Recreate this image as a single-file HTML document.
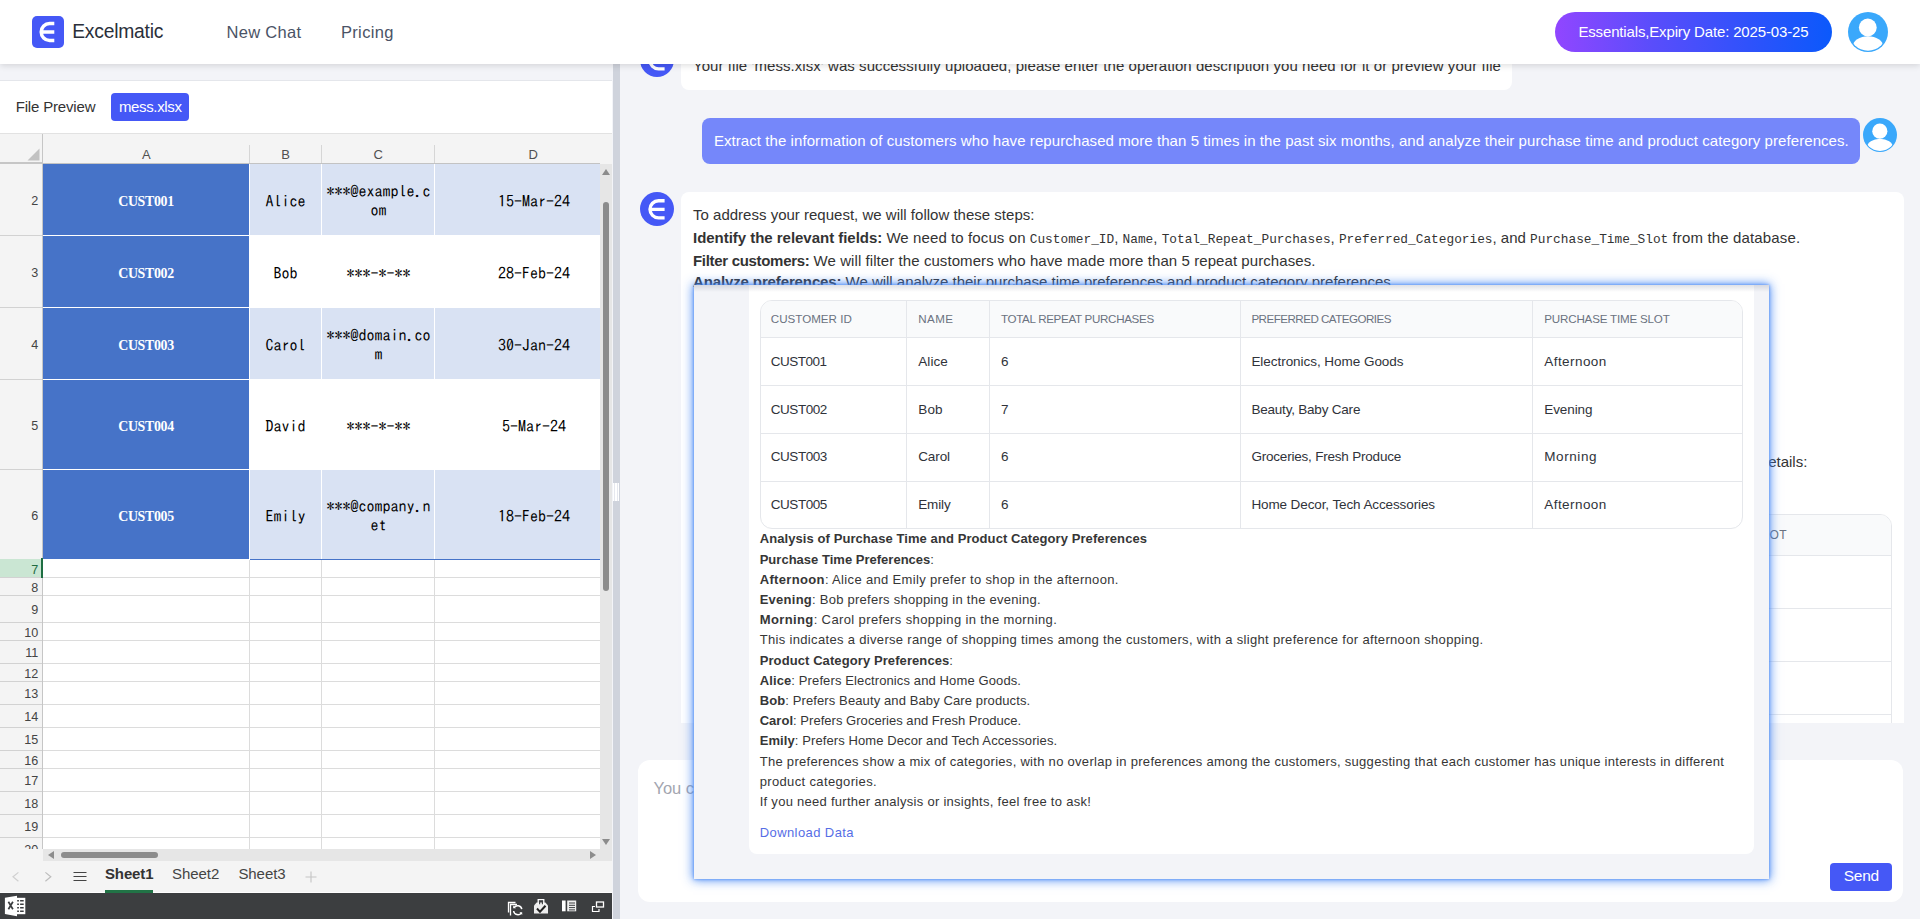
<!DOCTYPE html>
<html lang="en"><head><meta charset="utf-8"><title>Excelmatic</title>
<style>
html,body{margin:0;padding:0}
body{width:1920px;height:919px;overflow:hidden;position:relative;background:#f3f4f8;font-family:'Liberation Sans', sans-serif;color:#333}
b{font-weight:700}
.abs{position:absolute}
</style></head><body>
<div style="position:absolute;left:620px;top:64px;width:1300px;height:855px;background:#f3f4f8;"></div>
<svg width="34" height="34" viewBox="0 0 34 34" style="position:absolute;left:640px;top:43px"><circle cx="17" cy="17" r="17" fill="#4558f6"/><path d="M24.6 8.8 H18.55 A8.55 8.55 0 0 0 18.55 25.9 H24.6 M10 17.35 H24.6" fill="none" stroke="#fff" stroke-width="3.4"/></svg>
<div style="position:absolute;left:681px;top:30px;width:831px;height:60px;background:#fff;border-radius:8px;"></div>
<div style="position:absolute;top:66.00px;line-height:0;white-space:nowrap;font-size:15px;font-family:'Liberation Sans', sans-serif;left:693.00px;color:#333;"><span id="f0" style="letter-spacing:0.066px;">Your file 'mess.xlsx' was successfully uploaded, please enter the operation description you need for it or preview your file</span></div>
<div style="position:absolute;left:702px;top:118px;width:1158px;height:46px;background:#7587fa;border-radius:8px;"></div>
<div style="position:absolute;top:141.00px;line-height:0;white-space:nowrap;font-size:15px;font-family:'Liberation Sans', sans-serif;left:713.90px;color:#fff;"><span id="f1" style="letter-spacing:0.072px;">Extract the information of customers who have repurchased more than 5 times in the past six months, and analyze their purchase time and product category preferences.</span></div>
<svg width="34" height="34" viewBox="0 0 40 40" style="position:absolute;left:1863px;top:118px"><defs><clipPath id="u1863"><circle cx="20" cy="20" r="18.7"/></clipPath></defs><circle cx="20" cy="20" r="20" fill="#3aa8fb"/><g clip-path="url(#u1863)"><circle cx="19.8" cy="15.5" r="8.9" fill="#fff"/><ellipse cx="20" cy="34.7" rx="15.2" ry="10.4" fill="#fff"/></g></svg>
<svg width="34" height="34" viewBox="0 0 34 34" style="position:absolute;left:640px;top:192px"><circle cx="17" cy="17" r="17" fill="#4558f6"/><path d="M24.6 8.8 H18.55 A8.55 8.55 0 0 0 18.55 25.9 H24.6 M10 17.35 H24.6" fill="none" stroke="#fff" stroke-width="3.4"/></svg>
<div style="position:absolute;left:681px;top:192px;width:1223px;height:530.7px;background:#fff;border-radius:8px 8px 0 0;overflow:hidden"><div style="position:absolute;top:23.00px;line-height:0;white-space:nowrap;font-size:15px;font-family:'Liberation Sans', sans-serif;left:12.00px;color:#333;"><span id="f2" style="letter-spacing:0.008px;">To address your request, we will follow these steps:</span></div><div style="position:absolute;top:46.10px;line-height:0;white-space:nowrap;font-size:15px;font-family:'Liberation Sans', sans-serif;left:12.00px;color:#333;"><span id="f3" style="letter-spacing:-0.029px;"><b>Identify the relevant fields:</b></span> <span id="f4" style="letter-spacing:0.099px;">We need to focus on</span> <span style="font-family:'Liberation Mono',monospace;font-size:12.8px;">Customer_ID</span>, <span style="font-family:'Liberation Mono',monospace;font-size:12.8px;">Name</span>, <span style="font-family:'Liberation Mono',monospace;font-size:12.8px;">Total_Repeat_Purchases</span>, <span style="font-family:'Liberation Mono',monospace;font-size:12.8px;">Preferred_Categories</span>, and <span style="font-family:'Liberation Mono',monospace;font-size:12.8px;">Purchase_Time_Slot</span> <span id="f5" style="letter-spacing:0.151px;">from the database.</span></div><div style="position:absolute;top:69.00px;line-height:0;white-space:nowrap;font-size:15px;font-family:'Liberation Sans', sans-serif;left:12.00px;color:#333;"><span id="f6" style="letter-spacing:-0.312px;"><b>Filter customers:</b></span> <span id="f7" style="letter-spacing:0.073px;">We will filter the customers who have made more than 5 repeat purchases.</span></div><div style="position:absolute;top:90.40px;line-height:0;white-space:nowrap;font-size:15px;font-family:'Liberation Sans', sans-serif;left:12.00px;color:#333;"><span id="f8" style="letter-spacing:-0.125px;"><b>Analyze preferences:</b></span> <span id="f9" style="letter-spacing:-0.018px;">We will analyze their purchase time preferences and product category preferences.</span></div><div style="position:absolute;top:270.40px;line-height:0;white-space:nowrap;font-size:15px;font-family:'Liberation Sans', sans-serif;right:96.70px;color:#333;">Here is the information of the customers who meet the criteria, along with their details:</div><div style="position:absolute;left:12.600000000000023px;top:322px;width:1198.4px;height:260px;box-sizing:border-box;border:1px solid #e5e7eb;border-radius:12px 12px 0 0;overflow:hidden;background:#fff"><div style="position:absolute;left:0;top:0;right:0;height:40px;background:#f9fafb;border-bottom:1px solid #e5e7eb"></div><div style="position:absolute;left:0;right:0;top:93px;height:1px;background:#e5e7eb"></div><div style="position:absolute;left:0;right:0;top:146px;height:1px;background:#e5e7eb"></div><div style="position:absolute;left:0;right:0;top:199px;height:1px;background:#e5e7eb"></div></div><div style="position:absolute;top:343.34px;line-height:0;white-space:nowrap;font-size:12px;font-family:'Liberation Sans', sans-serif;right:116.80px;color:#6b7280;letter-spacing:0.5px;">PURCHASE TIME SLOT</div></div>
<div style="position:absolute;left:638px;top:760px;width:1265px;height:142px;background:#fff;border-radius:12px;"></div>
<div style="position:absolute;top:788.48px;line-height:0;white-space:nowrap;font-size:16.5px;font-family:'Liberation Sans', sans-serif;left:653.40px;color:#a3a6b0;">You can ask questions or give instructions about your file here</div>
<div style="position:absolute;left:1830px;top:863px;width:62px;height:28px;background:#4558f6;border-radius:4px;"></div>
<div style="position:absolute;top:876.43px;line-height:0;white-space:nowrap;font-size:15.5px;font-family:'Liberation Sans', sans-serif;left:1843.80px;color:#fff;"><span id="f10" style="letter-spacing:-0.301px;">Send</span></div>
<div style="position:absolute;left:694px;top:285.2px;width:1075.3px;height:593.6px;background:#f3f4f8;box-shadow:0 0 10px 1px rgba(66,133,244,0.9),0 0 3px 0 rgba(66,133,244,0.95);"><div style="position:absolute;left:0;top:0;right:0;bottom:0;overflow:hidden"><div style="position:absolute;left:54.5px;top:-15.199999999999989px;width:1005.5px;height:583.5px;background:#fff;border-radius:8px;"></div><div style="position:absolute;left:66.39999999999998px;top:15.199999999999989px;width:982.6px;height:228.39999999999998px;box-sizing:border-box;border:1px solid #e5e7eb;border-radius:12px;overflow:hidden;background:#fff;"><div style="position:absolute;left:0;top:0;right:0;height:36.30000000000001px;background:#f9fafb"></div></div><div style="position:absolute;left:67.39999999999998px;top:52.10000000000002px;width:980.6px;height:1px;background:#e5e7eb;"></div><div style="position:absolute;left:67.39999999999998px;top:99.60000000000002px;width:980.6px;height:1px;background:#e5e7eb;"></div><div style="position:absolute;left:67.39999999999998px;top:147.60000000000002px;width:980.6px;height:1px;background:#e5e7eb;"></div><div style="position:absolute;left:67.39999999999998px;top:195.60000000000002px;width:980.6px;height:1px;background:#e5e7eb;"></div><div style="position:absolute;left:212.29999999999995px;top:16.19999999999999px;width:1px;height:226.39999999999998px;background:#e5e7eb;"></div><div style="position:absolute;left:295.1px;top:16.19999999999999px;width:1px;height:226.39999999999998px;background:#e5e7eb;"></div><div style="position:absolute;left:545.5px;top:16.19999999999999px;width:1px;height:226.39999999999998px;background:#e5e7eb;"></div><div style="position:absolute;left:837.5px;top:16.19999999999999px;width:1px;height:226.39999999999998px;background:#e5e7eb;"></div><div style="position:absolute;top:34.08px;line-height:0;white-space:nowrap;font-size:11.6px;font-family:'Liberation Sans', sans-serif;left:76.80px;color:#6b7280;"><span id="f11" style="letter-spacing:0.004px;">CUSTOMER ID</span></div><div style="position:absolute;top:34.08px;line-height:0;white-space:nowrap;font-size:11.6px;font-family:'Liberation Sans', sans-serif;left:224.20px;color:#6b7280;"><span id="f12" style="letter-spacing:0.450px;">NAME</span></div><div style="position:absolute;top:34.08px;line-height:0;white-space:nowrap;font-size:11.6px;font-family:'Liberation Sans', sans-serif;left:306.90px;color:#6b7280;"><span id="f13" style="letter-spacing:-0.308px;">TOTAL REPEAT PURCHASES</span></div><div style="position:absolute;top:34.08px;line-height:0;white-space:nowrap;font-size:11.6px;font-family:'Liberation Sans', sans-serif;left:557.40px;color:#6b7280;"><span id="f14" style="letter-spacing:-0.515px;">PREFERRED CATEGORIES</span></div><div style="position:absolute;top:34.08px;line-height:0;white-space:nowrap;font-size:11.6px;font-family:'Liberation Sans', sans-serif;left:850.30px;color:#6b7280;"><span id="f15" style="letter-spacing:-0.186px;">PURCHASE TIME SLOT</span></div><div style="position:absolute;top:76.72px;line-height:0;white-space:nowrap;font-size:13.5px;font-family:'Liberation Sans', sans-serif;left:76.80px;color:#30333a;"><span id="f16" style="letter-spacing:-0.526px;">CUST001</span></div><div style="position:absolute;top:76.72px;line-height:0;white-space:nowrap;font-size:13.5px;font-family:'Liberation Sans', sans-serif;left:224.20px;color:#30333a;"><span id="f17" style="letter-spacing:0.107px;">Alice</span></div><div style="position:absolute;top:76.72px;line-height:0;white-space:nowrap;font-size:13.5px;font-family:'Liberation Sans', sans-serif;left:306.90px;color:#30333a;">6</div><div style="position:absolute;top:76.72px;line-height:0;white-space:nowrap;font-size:13.5px;font-family:'Liberation Sans', sans-serif;left:557.40px;color:#30333a;"><span id="f18" style="letter-spacing:-0.042px;">Electronics, Home Goods</span></div><div style="position:absolute;top:76.72px;line-height:0;white-space:nowrap;font-size:13.5px;font-family:'Liberation Sans', sans-serif;left:850.30px;color:#30333a;"><span id="f19" style="letter-spacing:0.428px;">Afternoon</span></div><div style="position:absolute;top:124.42px;line-height:0;white-space:nowrap;font-size:13.5px;font-family:'Liberation Sans', sans-serif;left:76.80px;color:#30333a;"><span id="f20" style="letter-spacing:-0.469px;">CUST002</span></div><div style="position:absolute;top:124.42px;line-height:0;white-space:nowrap;font-size:13.5px;font-family:'Liberation Sans', sans-serif;left:224.20px;color:#30333a;"><span id="f21" style="letter-spacing:0.190px;">Bob</span></div><div style="position:absolute;top:124.42px;line-height:0;white-space:nowrap;font-size:13.5px;font-family:'Liberation Sans', sans-serif;left:306.90px;color:#30333a;">7</div><div style="position:absolute;top:124.42px;line-height:0;white-space:nowrap;font-size:13.5px;font-family:'Liberation Sans', sans-serif;left:557.40px;color:#30333a;"><span id="f22" style="letter-spacing:-0.207px;">Beauty, Baby Care</span></div><div style="position:absolute;top:124.42px;line-height:0;white-space:nowrap;font-size:13.5px;font-family:'Liberation Sans', sans-serif;left:850.30px;color:#30333a;"><span id="f23" style="letter-spacing:-0.100px;">Evening</span></div><div style="position:absolute;top:172.12px;line-height:0;white-space:nowrap;font-size:13.5px;font-family:'Liberation Sans', sans-serif;left:76.80px;color:#30333a;"><span id="f24" style="letter-spacing:-0.469px;">CUST003</span></div><div style="position:absolute;top:172.12px;line-height:0;white-space:nowrap;font-size:13.5px;font-family:'Liberation Sans', sans-serif;left:224.20px;color:#30333a;"><span id="f25" style="letter-spacing:-0.093px;">Carol</span></div><div style="position:absolute;top:172.12px;line-height:0;white-space:nowrap;font-size:13.5px;font-family:'Liberation Sans', sans-serif;left:306.90px;color:#30333a;">6</div><div style="position:absolute;top:172.12px;line-height:0;white-space:nowrap;font-size:13.5px;font-family:'Liberation Sans', sans-serif;left:557.40px;color:#30333a;"><span id="f26" style="letter-spacing:-0.203px;">Groceries, Fresh Produce</span></div><div style="position:absolute;top:172.12px;line-height:0;white-space:nowrap;font-size:13.5px;font-family:'Liberation Sans', sans-serif;left:850.30px;color:#30333a;"><span id="f27" style="letter-spacing:0.574px;">Morning</span></div><div style="position:absolute;top:219.82px;line-height:0;white-space:nowrap;font-size:13.5px;font-family:'Liberation Sans', sans-serif;left:76.80px;color:#30333a;"><span id="f28" style="letter-spacing:-0.469px;">CUST005</span></div><div style="position:absolute;top:219.82px;line-height:0;white-space:nowrap;font-size:13.5px;font-family:'Liberation Sans', sans-serif;left:224.20px;color:#30333a;"><span id="f29" style="letter-spacing:-0.120px;">Emily</span></div><div style="position:absolute;top:219.82px;line-height:0;white-space:nowrap;font-size:13.5px;font-family:'Liberation Sans', sans-serif;left:306.90px;color:#30333a;">6</div><div style="position:absolute;top:219.82px;line-height:0;white-space:nowrap;font-size:13.5px;font-family:'Liberation Sans', sans-serif;left:557.40px;color:#30333a;"><span id="f30" style="letter-spacing:-0.107px;">Home Decor, Tech Accessories</span></div><div style="position:absolute;top:219.82px;line-height:0;white-space:nowrap;font-size:13.5px;font-family:'Liberation Sans', sans-serif;left:850.30px;color:#30333a;"><span id="f31" style="letter-spacing:0.428px;">Afternoon</span></div><div style="position:absolute;top:254.30px;line-height:0;white-space:nowrap;font-size:13px;font-family:'Liberation Sans', sans-serif;left:65.70px;color:#363636;"><span id="f32" style="letter-spacing:0.081px;"><b>Analysis of Purchase Time and Product Category Preferences</b></span></div><div style="position:absolute;top:274.49px;line-height:0;white-space:nowrap;font-size:13px;font-family:'Liberation Sans', sans-serif;left:65.70px;color:#363636;"><span id="f33" style="letter-spacing:0.014px;"><b>Purchase Time Preferences</b>:</span></div><div style="position:absolute;top:294.68px;line-height:0;white-space:nowrap;font-size:13px;font-family:'Liberation Sans', sans-serif;left:65.70px;color:#363636;"><span id="f34" style="letter-spacing:0.343px;"><b>Afternoon</b>: Alice and Emily prefer to shop in the afternoon.</span></div><div style="position:absolute;top:314.87px;line-height:0;white-space:nowrap;font-size:13px;font-family:'Liberation Sans', sans-serif;left:65.70px;color:#363636;"><span id="f35" style="letter-spacing:0.256px;"><b>Evening</b>: Bob prefers shopping in the evening.</span></div><div style="position:absolute;top:335.06px;line-height:0;white-space:nowrap;font-size:13px;font-family:'Liberation Sans', sans-serif;left:65.70px;color:#363636;"><span id="f36" style="letter-spacing:0.380px;"><b>Morning</b>: Carol prefers shopping in the morning.</span></div><div style="position:absolute;top:355.25px;line-height:0;white-space:nowrap;font-size:13px;font-family:'Liberation Sans', sans-serif;left:65.70px;color:#363636;"><span id="f37" style="letter-spacing:0.329px;">This indicates a diverse range of shopping times among the customers, with a slight preference for afternoon shopping.</span></div><div style="position:absolute;top:375.44px;line-height:0;white-space:nowrap;font-size:13px;font-family:'Liberation Sans', sans-serif;left:65.70px;color:#363636;"><span id="f38" style="letter-spacing:0.091px;"><b>Product Category Preferences</b>:</span></div><div style="position:absolute;top:395.63px;line-height:0;white-space:nowrap;font-size:13px;font-family:'Liberation Sans', sans-serif;left:65.70px;color:#363636;"><span id="f39" style="letter-spacing:0.116px;"><b>Alice</b>: Prefers Electronics and Home Goods.</span></div><div style="position:absolute;top:415.82px;line-height:0;white-space:nowrap;font-size:13px;font-family:'Liberation Sans', sans-serif;left:65.70px;color:#363636;"><span id="f40" style="letter-spacing:0.109px;"><b>Bob</b>: Prefers Beauty and Baby Care products.</span></div><div style="position:absolute;top:436.01px;line-height:0;white-space:nowrap;font-size:13px;font-family:'Liberation Sans', sans-serif;left:65.70px;color:#363636;"><span id="f41" style="letter-spacing:0.030px;"><b>Carol</b>: Prefers Groceries and Fresh Produce.</span></div><div style="position:absolute;top:456.20px;line-height:0;white-space:nowrap;font-size:13px;font-family:'Liberation Sans', sans-serif;left:65.70px;color:#363636;"><span id="f42" style="letter-spacing:0.093px;"><b>Emily</b>: Prefers Home Decor and Tech Accessories.</span></div><div style="position:absolute;top:476.39px;line-height:0;white-space:nowrap;font-size:13px;font-family:'Liberation Sans', sans-serif;left:65.70px;color:#363636;"><span id="f43" style="letter-spacing:0.290px;">The preferences show a mix of categories, with no overlap in preferences among the customers, suggesting that each customer has unique interests in different</span></div><div style="position:absolute;top:496.58px;line-height:0;white-space:nowrap;font-size:13px;font-family:'Liberation Sans', sans-serif;left:65.70px;color:#363636;"><span id="f44" style="letter-spacing:0.354px;">product categories.</span></div><div style="position:absolute;top:516.77px;line-height:0;white-space:nowrap;font-size:13px;font-family:'Liberation Sans', sans-serif;left:65.70px;color:#363636;"><span id="f45" style="letter-spacing:0.277px;">If you need further analysis or insights, feel free to ask!</span></div><div style="position:absolute;top:547.90px;line-height:0;white-space:nowrap;font-size:13px;font-family:'Liberation Sans', sans-serif;left:65.70px;color:#566ee6;"><span id="f46" style="letter-spacing:0.416px;">Download Data</span></div><div style="position:absolute;left:0px;top:0.0px;width:1075.3px;height:7px;background:linear-gradient(180deg,rgba(60,70,100,0.16),rgba(60,70,100,0));"></div></div></div>
<div style="position:absolute;left:0px;top:64px;width:612px;height:17px;background:#f3f4f8;border-bottom:1px solid #e4e6eb;box-sizing:border-box;"></div>
<div style="position:absolute;left:0px;top:81px;width:612px;height:52px;background:#fff;"></div>
<div style="position:absolute;top:106.50px;line-height:0;white-space:nowrap;font-size:15px;font-family:'Liberation Sans', sans-serif;left:15.70px;color:#333;"><span id="f47" style="letter-spacing:-0.174px;">File Preview</span></div>
<div style="position:absolute;left:111px;top:93px;width:78px;height:28px;background:#4558f6;border-radius:4px;"></div>
<div style="position:absolute;top:106.50px;line-height:0;white-space:nowrap;font-size:15px;font-family:'Liberation Sans', sans-serif;left:118.90px;color:#fff;"><span id="f48" style="letter-spacing:-0.349px;">mess.xlsx</span></div>
<div style="position:absolute;left:0px;top:133px;width:612px;height:760px;background:#fff;"></div>
<div style="position:absolute;left:0px;top:133px;width:612px;height:31px;background:#f4f4f4;border-top:1px solid #e2e2e2;box-sizing:border-box;"></div>
<div style="position:absolute;left:43px;top:163px;width:557px;height:1px;background:#c3c3c3;"></div>
<div style="position:absolute;left:0px;top:162px;width:43px;height:2px;background:#c6c6c6;"></div>
<div style="position:absolute;left:42px;top:134px;width:1px;height:30px;background:#c6c6c6;"></div>
<svg width="13" height="13" viewBox="0 0 13 13" style="position:absolute;left:27px;top:148px"><path d="M12.5 0.5 V12.5 H0.5 Z" fill="#c2c2c2"/></svg>
<div style="position:absolute;left:249px;top:145px;width:1px;height:18px;background:#d6d6d6;"></div>
<div style="position:absolute;left:321px;top:145px;width:1px;height:18px;background:#d6d6d6;"></div>
<div style="position:absolute;left:434px;top:145px;width:1px;height:18px;background:#d6d6d6;"></div>
<div style="position:absolute;top:155.30px;line-height:0;white-space:nowrap;font-size:13px;font-family:'Liberation Sans', sans-serif;left:146.30px;transform:translateX(-50%);color:#505050;">A</div>
<div style="position:absolute;top:155.30px;line-height:0;white-space:nowrap;font-size:13px;font-family:'Liberation Sans', sans-serif;left:285.60px;transform:translateX(-50%);color:#505050;">B</div>
<div style="position:absolute;top:155.30px;line-height:0;white-space:nowrap;font-size:13px;font-family:'Liberation Sans', sans-serif;left:378.20px;transform:translateX(-50%);color:#505050;">C</div>
<div style="position:absolute;top:155.30px;line-height:0;white-space:nowrap;font-size:13px;font-family:'Liberation Sans', sans-serif;left:533.20px;transform:translateX(-50%);color:#505050;">D</div>
<div style="position:absolute;left:0;top:0;width:612px;height:849px;overflow:hidden;clip-path:inset(164px 12px 0 0)"><div style="position:absolute;left:0px;top:164px;width:42px;height:697px;background:#f4f4f4;"></div><div style="position:absolute;left:42px;top:164px;width:1px;height:685px;background:#c6c6c6;"></div><div style="position:absolute;left:249px;top:560px;width:1px;height:289px;background:#dcdcdc;"></div><div style="position:absolute;left:321px;top:560px;width:1px;height:289px;background:#dcdcdc;"></div><div style="position:absolute;left:434px;top:560px;width:1px;height:289px;background:#dcdcdc;"></div><div style="position:absolute;left:0px;top:235px;width:42px;height:1px;background:#d2d2d2;"></div><div style="position:absolute;left:43px;top:164px;width:206px;height:71px;background:#4673c8;"></div><div style="position:absolute;left:43px;top:235px;width:207px;height:1px;background:#fff;"></div><div style="position:absolute;left:250px;top:164px;width:71px;height:71px;background:#d9e2f3;"></div><div style="position:absolute;left:322px;top:164px;width:112px;height:71px;background:#d9e2f3;"></div><div style="position:absolute;left:435px;top:164px;width:165px;height:71px;background:#d9e2f3;"></div><div style="position:absolute;top:201.61px;line-height:0;white-space:nowrap;font-size:13.9px;font-family:'Liberation Serif', serif;left:146.00px;transform:translateX(-50%);color:#fff;font-weight:700;"><span id="f49" style="letter-spacing:-0.327px;">CUST001</span></div><div style="position:absolute;top:201.02px;line-height:0;white-space:nowrap;font-size:16px;font-family:'IPAGothic', 'Liberation Mono', monospace;left:285.60px;transform:translateX(-50%);color:#000;">Alice</div><div style="position:absolute;top:190.82px;line-height:0;white-space:nowrap;font-size:16px;font-family:'IPAGothic', 'Liberation Mono', monospace;left:378.40px;transform:translateX(-50%);color:#000;">***@example.c</div><div style="position:absolute;top:209.82px;line-height:0;white-space:nowrap;font-size:16px;font-family:'IPAGothic', 'Liberation Mono', monospace;left:378.40px;transform:translateX(-50%);color:#000;">om</div><div style="position:absolute;top:201.02px;line-height:0;white-space:nowrap;font-size:16px;font-family:'IPAGothic', 'Liberation Mono', monospace;left:534.00px;transform:translateX(-50%);color:#000;">15-Mar-24</div><div style="position:absolute;top:200.93px;line-height:0;white-space:nowrap;font-size:12.6px;font-family:'Liberation Sans', sans-serif;left:37.60px;color:#444;left:auto;right:573.7px;">2</div><div style="position:absolute;left:0px;top:307px;width:42px;height:1px;background:#d2d2d2;"></div><div style="position:absolute;left:43px;top:236px;width:206px;height:71px;background:#4673c8;"></div><div style="position:absolute;left:43px;top:307px;width:207px;height:1px;background:#fff;"></div><div style="position:absolute;top:273.61px;line-height:0;white-space:nowrap;font-size:13.9px;font-family:'Liberation Serif', serif;left:146.00px;transform:translateX(-50%);color:#fff;font-weight:700;"><span id="f50" style="letter-spacing:-0.327px;">CUST002</span></div><div style="position:absolute;top:273.02px;line-height:0;white-space:nowrap;font-size:16px;font-family:'IPAGothic', 'Liberation Mono', monospace;left:285.60px;transform:translateX(-50%);color:#000;">Bob</div><div style="position:absolute;top:273.02px;line-height:0;white-space:nowrap;font-size:16px;font-family:'IPAGothic', 'Liberation Mono', monospace;left:378.40px;transform:translateX(-50%);color:#000;">***-*-**</div><div style="position:absolute;top:273.02px;line-height:0;white-space:nowrap;font-size:16px;font-family:'IPAGothic', 'Liberation Mono', monospace;left:534.00px;transform:translateX(-50%);color:#000;">28-Feb-24</div><div style="position:absolute;top:272.93px;line-height:0;white-space:nowrap;font-size:12.6px;font-family:'Liberation Sans', sans-serif;left:37.60px;color:#444;left:auto;right:573.7px;">3</div><div style="position:absolute;left:0px;top:379px;width:42px;height:1px;background:#d2d2d2;"></div><div style="position:absolute;left:43px;top:308px;width:206px;height:71px;background:#4673c8;"></div><div style="position:absolute;left:43px;top:379px;width:207px;height:1px;background:#fff;"></div><div style="position:absolute;left:250px;top:308px;width:71px;height:71px;background:#d9e2f3;"></div><div style="position:absolute;left:322px;top:308px;width:112px;height:71px;background:#d9e2f3;"></div><div style="position:absolute;left:435px;top:308px;width:165px;height:71px;background:#d9e2f3;"></div><div style="position:absolute;top:345.61px;line-height:0;white-space:nowrap;font-size:13.9px;font-family:'Liberation Serif', serif;left:146.00px;transform:translateX(-50%);color:#fff;font-weight:700;"><span id="f51" style="letter-spacing:-0.327px;">CUST003</span></div><div style="position:absolute;top:345.02px;line-height:0;white-space:nowrap;font-size:16px;font-family:'IPAGothic', 'Liberation Mono', monospace;left:285.60px;transform:translateX(-50%);color:#000;">Carol</div><div style="position:absolute;top:334.82px;line-height:0;white-space:nowrap;font-size:16px;font-family:'IPAGothic', 'Liberation Mono', monospace;left:378.40px;transform:translateX(-50%);color:#000;">***@domain.co</div><div style="position:absolute;top:353.82px;line-height:0;white-space:nowrap;font-size:16px;font-family:'IPAGothic', 'Liberation Mono', monospace;left:378.40px;transform:translateX(-50%);color:#000;">m</div><div style="position:absolute;top:345.02px;line-height:0;white-space:nowrap;font-size:16px;font-family:'IPAGothic', 'Liberation Mono', monospace;left:534.00px;transform:translateX(-50%);color:#000;">30-Jan-24</div><div style="position:absolute;top:344.93px;line-height:0;white-space:nowrap;font-size:12.6px;font-family:'Liberation Sans', sans-serif;left:37.60px;color:#444;left:auto;right:573.7px;">4</div><div style="position:absolute;left:0px;top:469px;width:42px;height:1px;background:#d2d2d2;"></div><div style="position:absolute;left:43px;top:380px;width:206px;height:89px;background:#4673c8;"></div><div style="position:absolute;left:43px;top:469px;width:207px;height:1px;background:#fff;"></div><div style="position:absolute;top:426.61px;line-height:0;white-space:nowrap;font-size:13.9px;font-family:'Liberation Serif', serif;left:146.00px;transform:translateX(-50%);color:#fff;font-weight:700;"><span id="f52" style="letter-spacing:-0.327px;">CUST004</span></div><div style="position:absolute;top:426.02px;line-height:0;white-space:nowrap;font-size:16px;font-family:'IPAGothic', 'Liberation Mono', monospace;left:285.60px;transform:translateX(-50%);color:#000;">David</div><div style="position:absolute;top:426.02px;line-height:0;white-space:nowrap;font-size:16px;font-family:'IPAGothic', 'Liberation Mono', monospace;left:378.40px;transform:translateX(-50%);color:#000;">***-*-**</div><div style="position:absolute;top:426.02px;line-height:0;white-space:nowrap;font-size:16px;font-family:'IPAGothic', 'Liberation Mono', monospace;left:534.00px;transform:translateX(-50%);color:#000;">5-Mar-24</div><div style="position:absolute;top:425.93px;line-height:0;white-space:nowrap;font-size:12.6px;font-family:'Liberation Sans', sans-serif;left:37.60px;color:#444;left:auto;right:573.7px;">5</div><div style="position:absolute;left:0px;top:559px;width:42px;height:1px;background:#d2d2d2;"></div><div style="position:absolute;left:43px;top:470px;width:206px;height:89px;background:#4673c8;"></div><div style="position:absolute;left:43px;top:559px;width:207px;height:1px;background:#fff;"></div><div style="position:absolute;left:250px;top:470px;width:71px;height:89px;background:#d9e2f3;"></div><div style="position:absolute;left:322px;top:470px;width:112px;height:89px;background:#d9e2f3;"></div><div style="position:absolute;left:435px;top:470px;width:165px;height:89px;background:#d9e2f3;"></div><div style="position:absolute;top:516.61px;line-height:0;white-space:nowrap;font-size:13.9px;font-family:'Liberation Serif', serif;left:146.00px;transform:translateX(-50%);color:#fff;font-weight:700;"><span id="f53" style="letter-spacing:-0.327px;">CUST005</span></div><div style="position:absolute;top:516.02px;line-height:0;white-space:nowrap;font-size:16px;font-family:'IPAGothic', 'Liberation Mono', monospace;left:285.60px;transform:translateX(-50%);color:#000;">Emily</div><div style="position:absolute;top:505.82px;line-height:0;white-space:nowrap;font-size:16px;font-family:'IPAGothic', 'Liberation Mono', monospace;left:378.40px;transform:translateX(-50%);color:#000;">***@company.n</div><div style="position:absolute;top:524.82px;line-height:0;white-space:nowrap;font-size:16px;font-family:'IPAGothic', 'Liberation Mono', monospace;left:378.40px;transform:translateX(-50%);color:#000;">et</div><div style="position:absolute;top:516.02px;line-height:0;white-space:nowrap;font-size:16px;font-family:'IPAGothic', 'Liberation Mono', monospace;left:534.00px;transform:translateX(-50%);color:#000;">18-Feb-24</div><div style="position:absolute;top:515.93px;line-height:0;white-space:nowrap;font-size:12.6px;font-family:'Liberation Sans', sans-serif;left:37.60px;color:#444;left:auto;right:573.7px;">6</div><div style="position:absolute;left:0px;top:577px;width:42px;height:1px;background:#d2d2d2;"></div><div style="position:absolute;left:43px;top:577px;width:557px;height:1px;background:#dcdcdc;"></div><div style="position:absolute;left:0px;top:559px;width:41px;height:18px;background:#cae6d3;"></div><div style="position:absolute;left:41px;top:558px;width:2px;height:20px;background:#1e6e42;"></div><div style="position:absolute;top:569.63px;line-height:0;white-space:nowrap;font-size:12.6px;font-family:'Liberation Sans', sans-serif;left:-0.60px;color:#1f6b41;left:auto;right:573.7px;">7</div><div style="position:absolute;left:0px;top:595px;width:42px;height:1px;background:#d2d2d2;"></div><div style="position:absolute;left:43px;top:595px;width:557px;height:1px;background:#dcdcdc;"></div><div style="position:absolute;top:587.63px;line-height:0;white-space:nowrap;font-size:12.6px;font-family:'Liberation Sans', sans-serif;left:-0.60px;color:#444;left:auto;right:573.7px;">8</div><div style="position:absolute;left:0px;top:622px;width:42px;height:1px;background:#d2d2d2;"></div><div style="position:absolute;left:43px;top:622px;width:557px;height:1px;background:#dcdcdc;"></div><div style="position:absolute;top:610.13px;line-height:0;white-space:nowrap;font-size:12.6px;font-family:'Liberation Sans', sans-serif;left:-0.60px;color:#444;left:auto;right:573.7px;">9</div><div style="position:absolute;left:0px;top:640px;width:42px;height:1px;background:#d2d2d2;"></div><div style="position:absolute;left:43px;top:640px;width:557px;height:1px;background:#dcdcdc;"></div><div style="position:absolute;top:632.63px;line-height:0;white-space:nowrap;font-size:12.6px;font-family:'Liberation Sans', sans-serif;left:-0.60px;color:#444;left:auto;right:573.7px;">10</div><div style="position:absolute;left:0px;top:663px;width:42px;height:1px;background:#d2d2d2;"></div><div style="position:absolute;left:43px;top:663px;width:557px;height:1px;background:#dcdcdc;"></div><div style="position:absolute;top:653.13px;line-height:0;white-space:nowrap;font-size:12.6px;font-family:'Liberation Sans', sans-serif;left:-0.60px;color:#444;left:auto;right:573.7px;">11</div><div style="position:absolute;left:0px;top:681px;width:42px;height:1px;background:#d2d2d2;"></div><div style="position:absolute;left:43px;top:681px;width:557px;height:1px;background:#dcdcdc;"></div><div style="position:absolute;top:673.63px;line-height:0;white-space:nowrap;font-size:12.6px;font-family:'Liberation Sans', sans-serif;left:-0.60px;color:#444;left:auto;right:573.7px;">12</div><div style="position:absolute;left:0px;top:704px;width:42px;height:1px;background:#d2d2d2;"></div><div style="position:absolute;left:43px;top:704px;width:557px;height:1px;background:#dcdcdc;"></div><div style="position:absolute;top:694.13px;line-height:0;white-space:nowrap;font-size:12.6px;font-family:'Liberation Sans', sans-serif;left:-0.60px;color:#444;left:auto;right:573.7px;">13</div><div style="position:absolute;left:0px;top:727px;width:42px;height:1px;background:#d2d2d2;"></div><div style="position:absolute;left:43px;top:727px;width:557px;height:1px;background:#dcdcdc;"></div><div style="position:absolute;top:717.13px;line-height:0;white-space:nowrap;font-size:12.6px;font-family:'Liberation Sans', sans-serif;left:-0.60px;color:#444;left:auto;right:573.7px;">14</div><div style="position:absolute;left:0px;top:750px;width:42px;height:1px;background:#d2d2d2;"></div><div style="position:absolute;left:43px;top:750px;width:557px;height:1px;background:#dcdcdc;"></div><div style="position:absolute;top:740.13px;line-height:0;white-space:nowrap;font-size:12.6px;font-family:'Liberation Sans', sans-serif;left:-0.60px;color:#444;left:auto;right:573.7px;">15</div><div style="position:absolute;left:0px;top:768px;width:42px;height:1px;background:#d2d2d2;"></div><div style="position:absolute;left:43px;top:768px;width:557px;height:1px;background:#dcdcdc;"></div><div style="position:absolute;top:760.63px;line-height:0;white-space:nowrap;font-size:12.6px;font-family:'Liberation Sans', sans-serif;left:-0.60px;color:#444;left:auto;right:573.7px;">16</div><div style="position:absolute;left:0px;top:791px;width:42px;height:1px;background:#d2d2d2;"></div><div style="position:absolute;left:43px;top:791px;width:557px;height:1px;background:#dcdcdc;"></div><div style="position:absolute;top:781.13px;line-height:0;white-space:nowrap;font-size:12.6px;font-family:'Liberation Sans', sans-serif;left:-0.60px;color:#444;left:auto;right:573.7px;">17</div><div style="position:absolute;left:0px;top:814px;width:42px;height:1px;background:#d2d2d2;"></div><div style="position:absolute;left:43px;top:814px;width:557px;height:1px;background:#dcdcdc;"></div><div style="position:absolute;top:804.13px;line-height:0;white-space:nowrap;font-size:12.6px;font-family:'Liberation Sans', sans-serif;left:-0.60px;color:#444;left:auto;right:573.7px;">18</div><div style="position:absolute;left:0px;top:837px;width:42px;height:1px;background:#d2d2d2;"></div><div style="position:absolute;left:43px;top:837px;width:557px;height:1px;background:#dcdcdc;"></div><div style="position:absolute;top:827.13px;line-height:0;white-space:nowrap;font-size:12.6px;font-family:'Liberation Sans', sans-serif;left:-0.60px;color:#444;left:auto;right:573.7px;">19</div><div style="position:absolute;left:0px;top:860px;width:42px;height:1px;background:#d2d2d2;"></div><div style="position:absolute;left:43px;top:860px;width:557px;height:1px;background:#dcdcdc;"></div><div style="position:absolute;top:850.13px;line-height:0;white-space:nowrap;font-size:12.6px;font-family:'Liberation Sans', sans-serif;left:-0.60px;color:#444;left:auto;right:573.7px;">20</div><div style="position:absolute;left:250px;top:559px;width:350px;height:1px;background:#4673c8;"></div></div>
<div style="position:absolute;left:0px;top:849px;width:43px;height:12px;background:#f4f4f4;"></div>
<div style="position:absolute;left:600px;top:164px;width:12px;height:697px;background:#e6e6e6;"></div>
<svg width="12" height="8" viewBox="0 0 12 8" style="position:absolute;left:600px;top:168px"><path d="M6 1 L10 7 H2 Z" fill="#8c8c8c"/></svg>
<div style="position:absolute;left:603px;top:202px;width:6px;height:389px;background:#8c8c8c;border-radius:3px;"></div>
<svg width="12" height="8" viewBox="0 0 12 8" style="position:absolute;left:600px;top:838px"><path d="M2 1 H10 L6 7 Z" fill="#8c8c8c"/></svg>
<div style="position:absolute;left:43px;top:849px;width:557px;height:12px;background:#e6e6e6;"></div>
<svg width="8" height="12" viewBox="0 0 8 12" style="position:absolute;left:47px;top:849px"><path d="M1 6 L7 2 V10 Z" fill="#8c8c8c"/></svg>
<div style="position:absolute;left:61px;top:852px;width:97px;height:6px;background:#8c8c8c;border-radius:3px;"></div>
<svg width="8" height="12" viewBox="0 0 8 12" style="position:absolute;left:589px;top:849px"><path d="M1 2 L7 6 L1 10 Z" fill="#8c8c8c"/></svg>
<div style="position:absolute;left:0px;top:861px;width:612px;height:32px;background:#f4f4f4;"></div>
<div style="position:absolute;left:0px;top:892px;width:612px;height:1px;background:#fdfdfd;"></div>
<svg width="100" height="32" viewBox="0 0 100 32" style="position:absolute;left:0;top:861px"><path d="M18.4 11.4 L13 15.8 L18.4 20.2" fill="none" stroke="#d0d0d0" stroke-width="1.2"/><path d="M45.4 11.4 L50.8 15.8 L45.4 20.2" fill="none" stroke="#bdbdbd" stroke-width="1.2"/><path d="M73.5 11.5 H86.5 M73.5 15.5 H86.5 M73.5 19.5 H86.5" stroke="#444" stroke-width="1.2"/></svg>
<div style="position:absolute;top:874.20px;line-height:0;white-space:nowrap;font-size:15px;font-family:'Liberation Sans', sans-serif;left:105.00px;color:#333;font-weight:700;"><span id="f54" style="letter-spacing:-0.134px;">Sheet1</span></div>
<div style="position:absolute;left:105px;top:890px;width:48px;height:3px;background:#217346;"></div>
<div style="position:absolute;top:874.20px;line-height:0;white-space:nowrap;font-size:15px;font-family:'Liberation Sans', sans-serif;left:172.00px;color:#444;"><span id="f55" style="letter-spacing:-0.058px;">Sheet2</span></div>
<div style="position:absolute;top:874.20px;line-height:0;white-space:nowrap;font-size:15px;font-family:'Liberation Sans', sans-serif;left:238.40px;color:#444;"><span id="f56" style="letter-spacing:-0.058px;">Sheet3</span></div>
<svg width="14" height="14" viewBox="0 0 14 14" style="position:absolute;left:304px;top:870px"><path d="M7 1.5 V12.5 M1.5 7 H12.5" stroke="#c4c4c4" stroke-width="1.1"/></svg>
<div style="position:absolute;left:0px;top:893px;width:612px;height:26px;background:#3c3e40;"></div>
<svg width="28" height="24" viewBox="0 0 28 24" style="position:absolute;left:4px;top:895px">
<rect x="12.5" y="2.8" width="8.8" height="16.4" fill="#fff"/>
<path d="M13.2 5.8 H14.9 M16.1 5.8 H19.7 M13.2 9.3 H14.9 M16.1 9.3 H19.7 M13.2 12.7 H14.9 M16.1 12.7 H19.7 M13.2 16.2 H14.9 M16.1 16.2 H19.7" stroke="#3c3e40" stroke-width="1.5"/>
<path d="M0.9 2.8 L13 0.7 V21.3 L0.9 19 Z" fill="#fff"/>
<path d="M4.4 6.8 L8.9 14.3 M8.9 6.8 L4.4 14.3" stroke="#3c3e40" stroke-width="1.7"/>
</svg>
<svg width="110" height="22" viewBox="0 0 110 22" style="position:absolute;left:500px;top:896px" fill="none" stroke="#fff">
<path d="M8.5 16.5 V6.5 H15.5 M10.5 19.5 V8.5 H17" stroke-width="1.3"/>
<path d="M21.8 13.2 A4.3 4.3 0 0 0 14 11.6 M13.6 15 A4.3 4.3 0 0 0 21.4 16.8" stroke-width="1.5"/>
<path d="M13.2 9.4 V12.2 H16 Z M22.2 19 V16.2 H19.4 Z" fill="#fff" stroke="none"/>
<path d="M34 17.5 V9.6 L36.6 6.6 H45.4 L48 9.6 V17.5 Z" fill="#ededed" stroke="none"/>
<path d="M38.2 8.6 V3.7 H43.8 V8.6" stroke-width="1.3"/>
<path d="M39.6 8.2 V5.2 H42.4 V8.2" stroke="#3c3e40" stroke-width="1.1"/>
<path d="M37 12.5 L40 15.8 L45.5 9.8" stroke="#222" stroke-width="2"/>
<rect x="62" y="4.5" width="3.6" height="10.8" fill="#fff" stroke="none"/>
<rect x="67.2" y="4.5" width="9" height="10.8" fill="#f0f0f0" stroke="none"/>
<path d="M69 7 H75 M69 9.3 H75 M69 11.6 H75 M69 13.9 H75" stroke="#3c3e40" stroke-width="1"/>
<rect x="96.5" y="6" width="7" height="5" stroke-width="1.3"/>
<path d="M95 10.5 H92.5 V15.5 H99 V13" stroke-width="1.2"/>
</svg>
<div style="position:absolute;left:612.6px;top:64px;width:7.6px;height:855px;background:#cfd3dc;"></div>
<div style="position:absolute;left:613px;top:483px;width:6px;height:18px;background:linear-gradient(90deg,#fff 0,#fff 1.5px,#e6e8ef 1.5px,#e6e8ef 2.5px,#fff 2.5px,#fff 4px,#e6e8ef 4px,#e6e8ef 5px,#fff 5px,#fff 6px);"></div>
<div style="position:absolute;left:0px;top:0px;width:1920px;height:64px;background:#fff;box-shadow:0 2px 6px rgba(0,0,0,0.12);"></div>
<div style="position:absolute;left:32px;top:16px;width:32px;height:32px;background:#4558f6;border-radius:5px;"><svg width="32" height="32" viewBox="0 0 32 32" style="position:absolute;left:0;top:0"><path d="M22.3 7.6 H17.6 A8.4 8.4 0 0 0 17.6 24.4 H22.3 M9.6 16 H22.3" fill="none" stroke="#fff" stroke-width="3.5" stroke-linecap="butt"/></svg></div>
<div style="position:absolute;top:32.11px;line-height:0;white-space:nowrap;font-size:19.3px;font-family:'Liberation Sans', sans-serif;left:72.20px;color:#2a2f3a;"><span id="f57" style="letter-spacing:-0.222px;">Excelmatic</span></div>
<div style="position:absolute;top:32.48px;line-height:0;white-space:nowrap;font-size:16.5px;font-family:'Liberation Sans', sans-serif;left:226.60px;color:#4a5366;"><span id="f58" style="letter-spacing:0.293px;">New Chat</span></div>
<div style="position:absolute;top:32.48px;line-height:0;white-space:nowrap;font-size:16.5px;font-family:'Liberation Sans', sans-serif;left:340.90px;color:#4a5366;"><span id="f59" style="letter-spacing:0.366px;">Pricing</span></div>
<div style="position:absolute;left:1555px;top:12px;width:277px;height:40px;border-radius:20px;background:linear-gradient(90deg,#9146ff 0%,#5a4dfb 35%,#2f52fb 70%,#0b59fb 100%);"></div>
<div style="position:absolute;top:31.60px;line-height:0;white-space:nowrap;font-size:15px;font-family:'Liberation Sans', sans-serif;left:1578.40px;color:#fff;"><span id="f60" style="letter-spacing:-0.151px;">Essentials,Expiry Date: 2025-03-25</span></div>
<svg width="40" height="40" viewBox="0 0 40 40" style="position:absolute;left:1848px;top:12px"><defs><clipPath id="c184812"><circle cx="20" cy="20" r="18.7"/></clipPath></defs><circle cx="20" cy="20" r="20" fill="#3aa8fb"/><g clip-path="url(#c184812)"><circle cx="19.8" cy="15.5" r="8.9" fill="#fff"/><ellipse cx="20" cy="34.7" rx="15.2" ry="10.4" fill="#fff"/></g></svg>
</body></html>
